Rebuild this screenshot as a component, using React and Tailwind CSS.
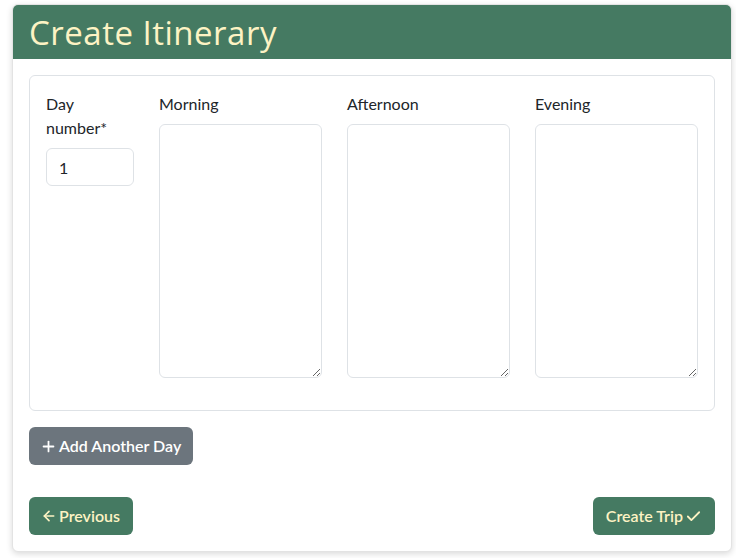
import { ArrowLeft, Plus, Check } from 'lucide-react'

const SLOTS = ['Morning', 'Afternoon', 'Evening']

export default function App() {
  return (
    <div className="min-h-[558px] bg-white pl-[12px] pr-[4px] pt-[4px] pb-[7px] font-['Lato',sans-serif] text-[#212529]">
      <div className="rounded-[6px] border border-[#e3e3e3] bg-white shadow-[0_2px_6px_rgba(0,0,0,0.15)] overflow-hidden">
        {/* Header */}
        <div className="h-[54px] bg-[#457a62] px-4 flex items-center">
          <h1 className="text-[#fdf3c4] text-[33px] leading-none font-['Open_Sans',sans-serif] tracking-[0.5px] pt-[1px]">
            Create Itinerary
          </h1>
        </div>

        {/* Body */}
        <div className="p-4">
          <div className="rounded-[6px] border border-[#dee2e6] px-4 pt-4 pb-4">
            <div className="grid grid-cols-[88px_1fr_1fr_1fr] gap-x-[25px]">
              <div>
                <label className="block text-[16px] leading-6 mb-2">Day number*</label>
                <input
                  type="number"
                  defaultValue="1"
                  className="w-full h-[38px] rounded-[6px] border border-[#dee2e6] px-3 text-[16px] outline-none"
                />
              </div>
              {SLOTS.map((s) => (
                <div key={s}>
                  <label className="block text-[16px] leading-6 mb-2">{s}</label>
                  <textarea className="block w-full h-[254px] rounded-[6px] border border-[#dee2e6] px-3 py-2 mb-4 outline-none" />
                </div>
              ))}
            </div>
          </div>

          <button className="mt-4 h-[38px] pl-[11px] pr-[12px] rounded-[6px] bg-[#6c757d] text-white text-[16px] font-semibold flex items-center gap-[2px]">
            <Plus size={17} strokeWidth={2.5} />
            Add Another Day
          </button>

          <div className="mt-8 flex justify-between">
            <button className="h-[38px] pl-3 pr-[13px] rounded-[6px] bg-[#457a62] text-[#fdf3c4] text-[16px] font-semibold flex items-center gap-[2px]">
              <ArrowLeft size={16} strokeWidth={2.5} />
              Previous
            </button>
            <button className="h-[38px] pl-[13px] pr-[13px] rounded-[6px] bg-[#457a62] text-[#fdf3c4] text-[16px] font-semibold flex items-center gap-[2px]">
              Create Trip
              <Check size={17} strokeWidth={2.5} />
            </button>
          </div>
        </div>
      </div>
    </div>
  )
}
